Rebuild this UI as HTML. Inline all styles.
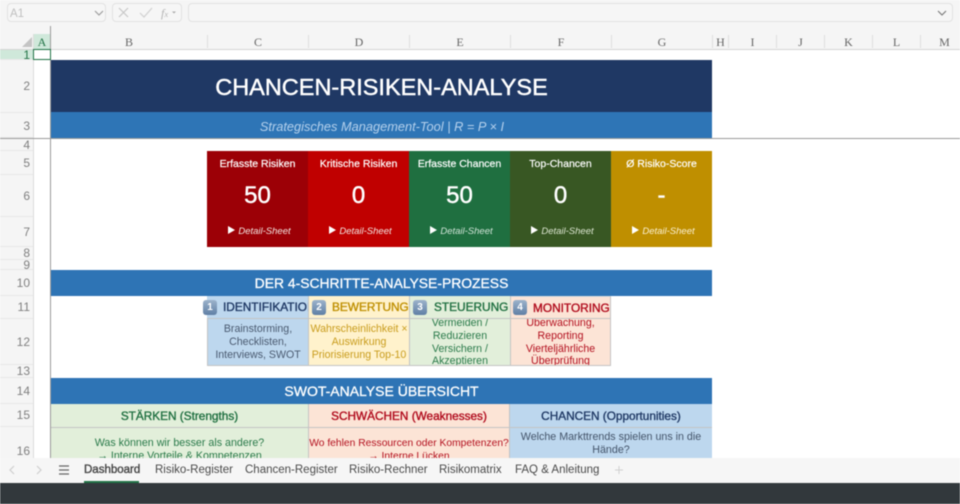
<!DOCTYPE html>
<html lang="de"><head><meta charset="utf-8"><title>Chancen-Risiken-Analyse</title>
<style>
*{box-sizing:border-box}
html,body{margin:0;padding:0;width:960px;height:504px;overflow:hidden;background:#fff}
body{font-family:"Liberation Sans",sans-serif;position:relative}
#w{position:absolute;left:0;top:0;width:960px;height:504px;overflow:hidden;filter:blur(.4px)}
.a{position:absolute}
.c{position:absolute;display:flex;align-items:center;justify-content:center;text-align:center;white-space:nowrap;overflow:hidden}
.ch{position:absolute;top:34px;height:15px;line-height:17px;text-align:center;font-family:"Liberation Serif",serif;font-size:12px;color:#666}
.cs{position:absolute;top:35px;width:1px;height:13px;background:#dedede}
.rh{position:absolute;left:0;width:33px;text-align:right;padding-right:3px;font-size:12px;color:#808080;display:flex;align-items:center;justify-content:flex-end;border-bottom:1px solid #e8e8e8;background:#f5f5f5}
.k{position:absolute;top:151px;height:96px;width:101px;color:#fff;text-align:center}
.k .t{position:absolute;top:7px;left:0;right:0;font-size:10.5px;line-height:13px;white-space:nowrap;-webkit-text-stroke:.2px #fff}
.k .n{position:absolute;top:31px;left:0;right:0;font-size:24px;line-height:28px;-webkit-text-stroke:.45px #fff}
.k .d{position:absolute;top:74px;left:0;right:0;padding-left:4px;font-size:9.5px;font-style:italic;line-height:13px;color:#f2e4e0;white-space:nowrap}
.k .d i{display:inline-block;width:0;height:0;border-left:7px solid #fff;border-top:4px solid transparent;border-bottom:4px solid transparent;margin-right:3px;vertical-align:0}
.band{position:absolute;left:51px;width:661px;background:#2e74b5;color:#fff;text-align:center;font-size:14px;line-height:26px;-webkit-text-stroke:.3px #fff}
.b{position:absolute;width:14px;height:15px;border-radius:3px;background:linear-gradient(#9db3cb,#5f7fa5);color:#fff;font-size:10px;font-weight:bold;line-height:15px;text-align:center;top:300px}
.st{position:absolute;top:296px;height:23px;font-size:11.85px;line-height:23px;white-space:nowrap;overflow:hidden;border-bottom:1px solid #c4c4c4}
.pb{position:absolute;top:319px;height:47px;font-size:10.6px;line-height:12.7px;text-align:center;border-right:1px solid #c4c4c4;border-bottom:1px solid #c4c4c4;overflow:hidden;display:flex;flex-direction:column;justify-content:center;white-space:nowrap;padding-top:1px}
.tab{position:absolute;top:458px;height:25px;line-height:24px;font-size:11.5px;color:#4a4a4a;white-space:nowrap}
.sh{font-size:11.8px;-webkit-text-stroke:.35px currentColor;border-bottom:1px solid #c4c4c4}
</style></head><body><div id="w">

<!-- top toolbar -->
<div class="a" style="left:0;top:0;width:960px;height:49px;background:#f5f5f5"></div>
<div class="a" style="left:7px;top:3px;width:99px;height:19px;border:1px solid #e2e2e2;border-radius:4px;background:#f6f6f6;font-size:11.5px;line-height:20px;color:#c0c0c0;padding-left:2px">A1</div>
<svg class="a" style="left:93px;top:9px" width="12" height="8" viewBox="0 0 12 8"><path d="M2 2l4 4 4-4" fill="none" stroke="#999" stroke-width="1.1"/></svg>
<div class="a" style="left:112px;top:3px;width:70px;height:19px;border:1px solid #e2e2e2;border-radius:4px;background:#f6f6f6"></div>
<svg class="a" style="left:112px;top:3px" width="70" height="19" viewBox="0 0 70 19"><path d="M7 5l9 9M16 5l-9 9" stroke="#c8c8c8" stroke-width="1.2" fill="none"/><path d="M28 10l4 4 8-9" stroke="#d0d0d0" stroke-width="1.2" fill="none"/><path d="M60 8.5l2 2 2-2z" fill="#aaa"/></svg>
<div class="a" style="left:161px;top:6px;font:italic 12px 'Liberation Serif',serif;color:#b5b5b5;line-height:15px">f<span style="font-size:8.5px">x</span></div>
<div class="a" style="left:188px;top:3px;width:765px;height:19px;border:1px solid #e2e2e2;border-radius:4px;background:#f6f6f6"></div>
<svg class="a" style="left:936px;top:9px" width="12" height="8" viewBox="0 0 12 8"><path d="M2 2l4 4 4-4" fill="none" stroke="#777" stroke-width="1.1"/></svg>

<!-- column headers -->
<div class="a" style="left:34px;top:34px;width:16px;height:15px;background:#cfe8da"></div>
<div class="ch" style="left:34px;width:16px;color:#217346">A</div>
<div class="ch" style="left:51px;width:156px">B</div>
<div class="ch" style="left:208px;width:100px">C</div>
<div class="ch" style="left:309px;width:100px">D</div>
<div class="ch" style="left:410px;width:100px">E</div>
<div class="ch" style="left:511px;width:100px">F</div>
<div class="ch" style="left:612px;width:100px">G</div>
<div class="ch" style="left:713px;width:15px">H</div>
<div class="ch" style="left:729px;width:47px">I</div>
<div class="ch" style="left:777px;width:47px">J</div>
<div class="ch" style="left:825px;width:47px">K</div>
<div class="ch" style="left:873px;width:47px">L</div>
<div class="ch" style="left:921px;width:47px">M</div>
<div class="cs" style="left:207px"></div><div class="cs" style="left:308px"></div><div class="cs" style="left:409px"></div><div class="cs" style="left:510px"></div><div class="cs" style="left:611px"></div><div class="cs" style="left:712px"></div><div class="cs" style="left:728px"></div><div class="cs" style="left:776px"></div><div class="cs" style="left:824px"></div><div class="cs" style="left:872px"></div><div class="cs" style="left:920px"></div>
<div class="a" style="left:0;top:49px;width:960px;height:1px;background:#d4d4d4"></div>
<svg class="a" style="left:21px;top:36px" width="12" height="12" viewBox="0 0 12 12"><path d="M11 1v10H1z" fill="#c4c4c4"/></svg>

<!-- row headers -->
<div class="rh" style="top:50px;height:10px;background:#cfe8da;color:#217346;padding-top:1px">1</div>
<div class="rh" style="top:60px;height:53px">2</div>
<div class="rh" style="top:113px;height:25px;padding-top:2px">3</div>
<div class="rh" style="top:139px;height:12px">4</div>
<div class="rh" style="top:151px;height:24px">5</div>
<div class="rh" style="top:175px;height:42px">6</div>
<div class="rh" style="top:217px;height:30px">7</div>
<div class="rh" style="top:247px;height:13px">8</div>
<div class="rh" style="top:260px;height:10px">9</div>
<div class="rh" style="top:270px;height:26px">10</div>
<div class="rh" style="top:296px;height:23px">11</div>
<div class="rh" style="top:319px;height:46px">12</div>
<div class="rh" style="top:365px;height:13px">13</div>
<div class="rh" style="top:378px;height:26px">14</div>
<div class="rh" style="top:404px;height:23px">15</div>
<div class="rh" style="top:427px;height:31px;border:0;padding-top:17px">16</div>
<div class="a" style="left:33px;top:34px;width:1px;height:424px;background:#dcdcdc"></div>

<!-- sheet freeze lines -->
<div class="a" style="left:50px;top:26px;width:1px;height:432px;background:#9a9a9a"></div>
<div class="a" style="left:0;top:138px;width:960px;height:1px;background:#9a9a9a"></div>

<!-- selected cell -->
<div class="a" style="left:33px;top:49px;width:18px;height:11px;border:1.5px solid #217346"></div>

<!-- title -->
<div class="c" style="left:51px;top:60px;width:661px;height:52px;padding-top:2px;background:#1f3864;color:#fff;font-size:23.5px;-webkit-text-stroke:.45px #fff">CHANCEN-RISIKEN-ANALYSE</div>
<div class="c" style="left:51px;top:112px;width:661px;height:26px;padding-top:2px;padding-left:1px;background:#2e75b6;color:#b4d0ec;font-size:12.8px;font-style:italic">Strategisches Management-Tool | R = P × I</div>

<!-- KPI -->
<div class="k" style="left:207px;background:#9c0006"><div class="t">Erfasste Risiken</div><div class="n">50</div><div class="d"><i></i>Detail-Sheet</div></div>
<div class="k" style="left:308px;background:#c00000"><div class="t">Kritische Risiken</div><div class="n">0</div><div class="d"><i></i>Detail-Sheet</div></div>
<div class="k" style="left:409px;background:#1f6f40"><div class="t">Erfasste Chancen</div><div class="n">50</div><div class="d" style="color:#cfe3d6"><i></i>Detail-Sheet</div></div>
<div class="k" style="left:510px;background:#385723"><div class="t">Top-Chancen</div><div class="n">0</div><div class="d" style="color:#dbe5d0"><i></i>Detail-Sheet</div></div>
<div class="k" style="left:611px;width:101px;background:#bf8f00"><div class="t">Ø Risiko-Score</div><div class="n">-</div><div class="d" style="color:#fbf0d0"><i></i>Detail-Sheet</div></div>

<!-- process -->
<div class="band" style="top:270px;height:26px;font-size:13.9px">DER 4-SCHRITTE-ANALYSE-PROZESS</div>

<div class="st" style="left:207px;width:102px;background:#bdd7ee;color:#1f3864;padding-left:16px;border-right:1px solid #c4c4c4;-webkit-text-stroke:.35px #1f3864">IDENTIFIKATIOI</div>
<div class="st" style="left:309px;width:101px;background:#fff2cc;color:#bf8f00;padding-left:23px;border-right:1px solid #c4c4c4;-webkit-text-stroke:.35px #bf8f00">BEWERTUNG</div>
<div class="st" style="left:410px;width:101px;background:#e2efda;color:#1f6f40;padding-left:24px;border-right:1px solid #c4c4c4;-webkit-text-stroke:.35px #1f6f40">STEUERUNG</div>
<div class="st" style="left:511px;width:100px;background:#fce4d6;color:#b00a1c;padding-left:22px;border-right:1px solid #c4c4c4;border-top:1px solid #ddd;-webkit-text-stroke:.35px #b00a1c">MONITORING</div>
<div class="b" style="left:203px">1</div>
<div class="b" style="left:312px">2</div>
<div class="b" style="left:413px">3</div>
<div class="b" style="left:513px">4</div>

<div class="pb" style="left:207px;width:102px;background:#bdd7ee;color:#4a5a70;border-left:1px solid #c4c4c4">Brainstorming,<br>Checklisten,<br>Interviews, SWOT</div>
<div class="pb" style="left:309px;width:101px;background:#fff2cc;color:#c99c1c">Wahrscheinlichkeit ×<br>Auswirkung<br>Priorisierung Top-10</div>
<div class="pb" style="left:410px;width:101px;background:#e2efda;color:#2a7a4a">Vermeiden /<br>Reduzieren<br>Versichern /<br>Akzeptieren</div>
<div class="pb" style="left:511px;width:100px;background:#fce4d6;color:#b3101f">Überwachung,<br>Reporting<br>Vierteljährliche<br>Überprüfung</div>

<!-- SWOT -->
<div class="band" style="top:378px;height:26px">SWOT-ANALYSE ÜBERSICHT</div>
<div class="c sh" style="left:51px;top:404px;width:258px;height:24px;background:#e2efda;color:#1f6f40;border-right:1px solid #c4c4c4">STÄRKEN (Strengths)</div>
<div class="c sh" style="left:309px;top:404px;width:201px;height:24px;background:#fce4d6;color:#b00a1c;border-right:1px solid #c4c4c4">SCHWÄCHEN (Weaknesses)</div>
<div class="c sh" style="left:510px;top:404px;width:202px;height:24px;background:#bdd7ee;color:#1f3864">CHANCEN (Opportunities)</div>
<div class="a" style="left:51px;top:428px;width:258px;height:30px;background:#e2efda;color:#2a7a4a;font-size:10.7px;line-height:13px;text-align:center;padding-top:9px;border-right:1px solid #c4c4c4;overflow:hidden">Was können wir besser als andere?<br>→ Interne Vorteile &amp; Kompetenzen</div>
<div class="a" style="left:309px;top:428px;width:201px;height:30px;background:#fce4d6;color:#b3101f;font-size:10.3px;line-height:13px;text-align:center;padding-top:9px;border-right:1px solid #c4c4c4;overflow:hidden;white-space:nowrap">Wo fehlen Ressourcen oder Kompetenzen?<br>→ Interne Lücken</div>
<div class="a" style="left:510px;top:428px;width:202px;height:30px;background:#bdd7ee;color:#44546a;font-size:10.7px;line-height:13px;text-align:center;padding-top:3px;overflow:hidden">Welche Markttrends spielen uns in die<br>Hände?</div>

<!-- tabs -->
<div class="a" style="left:0;top:458px;width:960px;height:25px;background:#f6f6f6"></div>
<svg class="a" style="left:7px;top:464px" width="40" height="12" viewBox="0 0 40 12"><path d="M7 2L3 6l4 4" fill="none" stroke="#cfcfcf" stroke-width="1.2"/><path d="M30 2l4 4-4 4" fill="none" stroke="#cfcfcf" stroke-width="1.2"/></svg>
<svg class="a" style="left:58px;top:464px" width="12" height="12" viewBox="0 0 12 12"><path d="M1 2h10M1 6h10M1 10h10" stroke="#666" stroke-width="1.2"/></svg>
<div class="tab" style="left:84px;color:#444;-webkit-text-stroke:.35px #444">Dashboard</div>
<div class="a" style="left:84px;top:481px;width:55px;height:2.5px;background:#217346"></div>
<div class="tab" style="left:155px">Risiko-Register</div>
<div class="tab" style="left:245px">Chancen-Register</div>
<div class="tab" style="left:349px">Risiko-Rechner</div>
<div class="tab" style="left:439px">Risikomatrix</div>
<div class="tab" style="left:515px">FAQ &amp; Anleitung</div>
<svg class="a" style="left:614px;top:465px" width="10" height="10" viewBox="0 0 10 10"><path d="M5 1v8M1 5h8" stroke="#d0d0d0" stroke-width="1"/></svg>

<div class="a" style="left:0;top:483px;width:960px;height:21px;background:#32383c"></div>
</div></body></html>
